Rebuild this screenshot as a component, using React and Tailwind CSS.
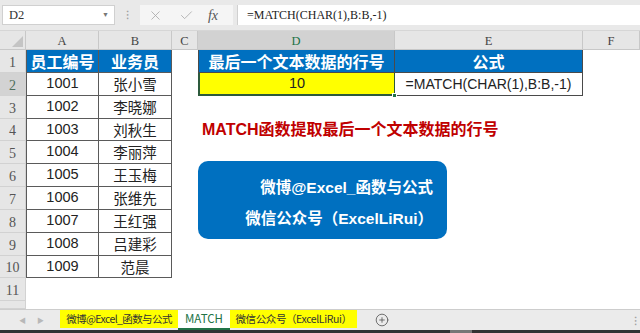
import { X, Check, CirclePlus } from 'lucide-react';

const SANS = "font-['Liberation_Sans','Noto_Sans_CJK_SC',sans-serif]";
const SERIF = "font-['Liberation_Serif','Noto_Serif_CJK_SC',serif]";
const CJK = "font-['Noto_Sans_CJK_SC','Liberation_Sans',sans-serif]";

const people = [
    ['1001', '张小雪'],
    ['1002', '李晓娜'],
    ['1003', '刘秋生'],
    ['1004', '李丽萍'],
    ['1005', '王玉梅'],
    ['1006', '张维先'],
    ['1007', '王红强'],
    ['1008', '吕建彩'],
    ['1009', '范晨'],
];

// row heights for rows 1..11, then the cut-off row 12
const rowHeights = ['h-[23px]', 'h-[23px]', 'h-[23px]', 'h-[22px]', 'h-[23px]', 'h-[23px]', 'h-[23px]', 'h-[23px]', 'h-[23px]', 'h-[22px]', 'h-[23px]', 'h-[8px]'];

const columns = [
    { name: 'A', w: 'w-[73px]' },
    { name: 'B', w: 'w-[73px]' },
    { name: 'C', w: 'w-[26px]' },
    { name: 'D', w: 'w-[197px]', active: true },
    { name: 'E', w: 'w-[188px]' },
    { name: 'F', w: 'flex-1' },
];

const tableCell = 'shrink-0 flex items-center justify-center border-r border-b border-[#5a5a5a]';

const Row = ({ n, children }) => (
    <div className={`flex ${rowHeights[n - 1]}`}>
        <div
            className={`w-[26px] shrink-0 flex items-center justify-center pt-[2px] border-r border-b border-[#d2d2d2] text-[14px] ${SERIF} ${
                n === 2 ? 'bg-[#d3d3d3] text-[#4f6f5c]' : 'bg-[#e6e6e6] text-[#555]'
            }`}
        >
            {n <= 11 ? n : ''}
        </div>
        {children}
    </div>
);

const EmployeeCells = ({ index }) => {
    if (index === 0) {
        return (
            <>
                <div className={`${tableCell} w-[73px] border-l bg-[#0070c0] text-white font-bold text-[16px] ${CJK}`}>员工编号</div>
                <div className={`${tableCell} w-[73px] bg-[#0070c0] text-white font-bold text-[16px] ${CJK}`}>业务员</div>
            </>
        );
    }
    const person = people[index - 1];
    if (!person) {
        return <div className="w-[146px] shrink-0"></div>;
    }
    return (
        <>
            <div className={`${tableCell} w-[73px] border-l bg-white text-[14.5px] text-[#222] ${SANS}`}>{person[0]}</div>
            <div className={`${tableCell} w-[73px] bg-white text-[14.5px] text-[#222] ${CJK}`}>{person[1]}</div>
        </>
    );
};

const RightCells = ({ index }) => {
    if (index === 0) {
        return (
            <>
                <div className={`w-[197px] shrink-0 flex items-center justify-center border-l border-b border-r border-[#4a4a4a] bg-[#0070c0] text-white font-bold text-[16px] ${CJK}`}>
                    最后一个文本数据的行号
                </div>
                <div className={`w-[188px] shrink-0 flex items-center justify-center border-b border-r border-[#4a4a4a] bg-[#0070c0] text-white font-bold text-[16px] ${CJK}`}>
                    公式
                </div>
            </>
        );
    }
    if (index === 1) {
        return (
            <>
                <div className={`relative w-[197px] shrink-0 flex items-center justify-center border-l-2 border-b-2 border-r border-[#2d5a3c] bg-[#ffff00] text-[14.5px] text-[#222] ${SANS}`}>
                    10
                    <span className="absolute -right-[3px] -bottom-[4px] w-[5px] h-[5px] bg-[#217346] border border-white"></span>
                </div>
                <div className={`w-[188px] shrink-0 flex items-center justify-center border-b border-r border-[#4a4a4a] bg-white text-[14px] text-[#222] ${SANS}`}>
                    =MATCH(CHAR(1),B:B,-1)
                </div>
            </>
        );
    }
    if (index === 3) {
        return (
            <div className={`w-[197px] shrink-0 flex items-center pl-[4px] whitespace-nowrap overflow-visible text-[16px] font-bold text-[#c00000] ${SANS}`}>
                MATCH函数提取最后一个文本数据的行号
            </div>
        );
    }
    return null;
};

const App = () => {
    return (
        <div className={`w-[640px] h-[333px] overflow-hidden bg-white flex flex-col ${SANS}`}>
            {/* formula bar */}
            <div className="h-[30px] shrink-0 flex items-center bg-[#e9e9e9]">
                <div className="ml-[2px] w-[113px] h-[20px] bg-white border border-[#d0d0d0] flex items-center justify-between pl-[6px] pr-[5px]">
                    <span className={`${SERIF} text-[12.5px] text-[#333]`}>D2</span>
                    <span className="text-[7px] text-[#777]">▼</span>
                </div>
                <div className="w-[25px] flex justify-center text-[#a0a0a0] text-[12px]">⁝</div>
                <div className="w-[93px] h-[20px] bg-[#f5f5f5] flex items-center">
                    <span className="w-[30px] flex justify-center text-[#a8a8a8]">
                        <X size={15} strokeWidth={1.3} />
                    </span>
                    <span className="w-[32px] flex justify-center text-[#a8a8a8]">
                        <Check size={15} strokeWidth={1.3} />
                    </span>
                    <span className={`w-[22px] flex justify-center italic text-[14px] text-[#555] ${SERIF}`}>fx</span>
                </div>
                <div className={`ml-[4px] flex-1 h-[20px] bg-white border-l border-[#d0d0d0] flex items-center pl-[9px] text-[12px] text-[#222] ${SERIF}`}>
                    =MATCH(CHAR(1),B:B,-1)
                </div>
            </div>

            {/* column headers */}
            <div className="h-[20px] shrink-0 flex border-t border-[#d6d6d6]">
                <div className="w-[26px] shrink-0 bg-[#e6e6e6] border-r border-b border-[#c8c8c8] flex items-end justify-end p-[2px]">
                    <svg width="11" height="11" viewBox="0 0 11 11">
                        <polygon points="11,0 11,11 0,11" fill="#c4c4c4" />
                    </svg>
                </div>
                {columns.map((col) => (
                    <div
                        key={col.name}
                        className={`${col.w} shrink-0 flex items-center justify-center pt-[3px] border-r border-b border-[#c8c8c8] text-[12.5px] ${SERIF} ${
                            col.active ? 'bg-[#d2d2d2] text-[#217346]' : 'bg-[#e6e6e6] text-[#444]'
                        }`}
                    >
                        {col.name}
                    </div>
                ))}
            </div>

            {/* sheet body */}
            <div className="relative h-[259px] shrink-0 overflow-hidden">
                {rowHeights.map((_, i) => (
                    <Row key={i} n={i + 1}>
                        <EmployeeCells index={i} />
                        <div className="w-[26px] shrink-0"></div>
                        <RightCells index={i} />
                    </Row>
                ))}

                {/* text box shape */}
                <div className={`absolute left-[198px] top-[111px] w-[249px] h-[78px] rounded-[10px] bg-[#0070c0] flex flex-col items-end justify-center pt-[5px] pr-[14px] text-white font-bold text-[15.5px] leading-[31px] ${SANS}`}>
                    <div>微博@Excel_函数与公式</div>
                    <div>微信公众号（ExcelLiRui）</div>
                </div>
            </div>

            {/* sheet tabs */}
            <div className={`h-[21px] shrink-0 flex bg-[#ebebeb] border-t border-[#cdcdcd] ${CJK}`}>
                <div className="w-[60px] shrink-0 flex items-center text-[#b8b8b8] text-[7px]">
                    <span className="ml-[19px]">◀</span>
                    <span className="ml-[11px]">▶</span>
                </div>
                <div className="w-[118px] h-[18px] shrink-0 bg-[#ffff00] flex items-center justify-center text-[10.5px] tracking-[-0.6px] text-[#333] whitespace-nowrap">
                    微博@Excel_函数与公式
                </div>
                <div className="w-[52px] shrink-0 bg-white border-b-2 border-[#217346] flex items-center justify-center text-[11.5px] text-[#217346]">
                    MATCH
                </div>
                <div className="w-[127px] h-[18px] shrink-0 bg-[#ffff00] flex items-center justify-center text-[10.5px] tracking-[-0.4px] text-[#333] whitespace-nowrap">
                    微信公众号（ExcelLiRui）
                </div>
                <div className="ml-[18px] flex items-center text-[#555]">
                    <CirclePlus size={14} strokeWidth={1.4} />
                </div>
                <div className="ml-auto mr-[3px] flex items-center text-[#a0a0a0] text-[12px]">⁝</div>
            </div>
            <div className="h-[3px] shrink-0 flex bg-[#333]">
                <div className="ml-[450px] w-[22px] bg-[#777]"></div>
            </div>
        </div>
    );
};

export default App;
